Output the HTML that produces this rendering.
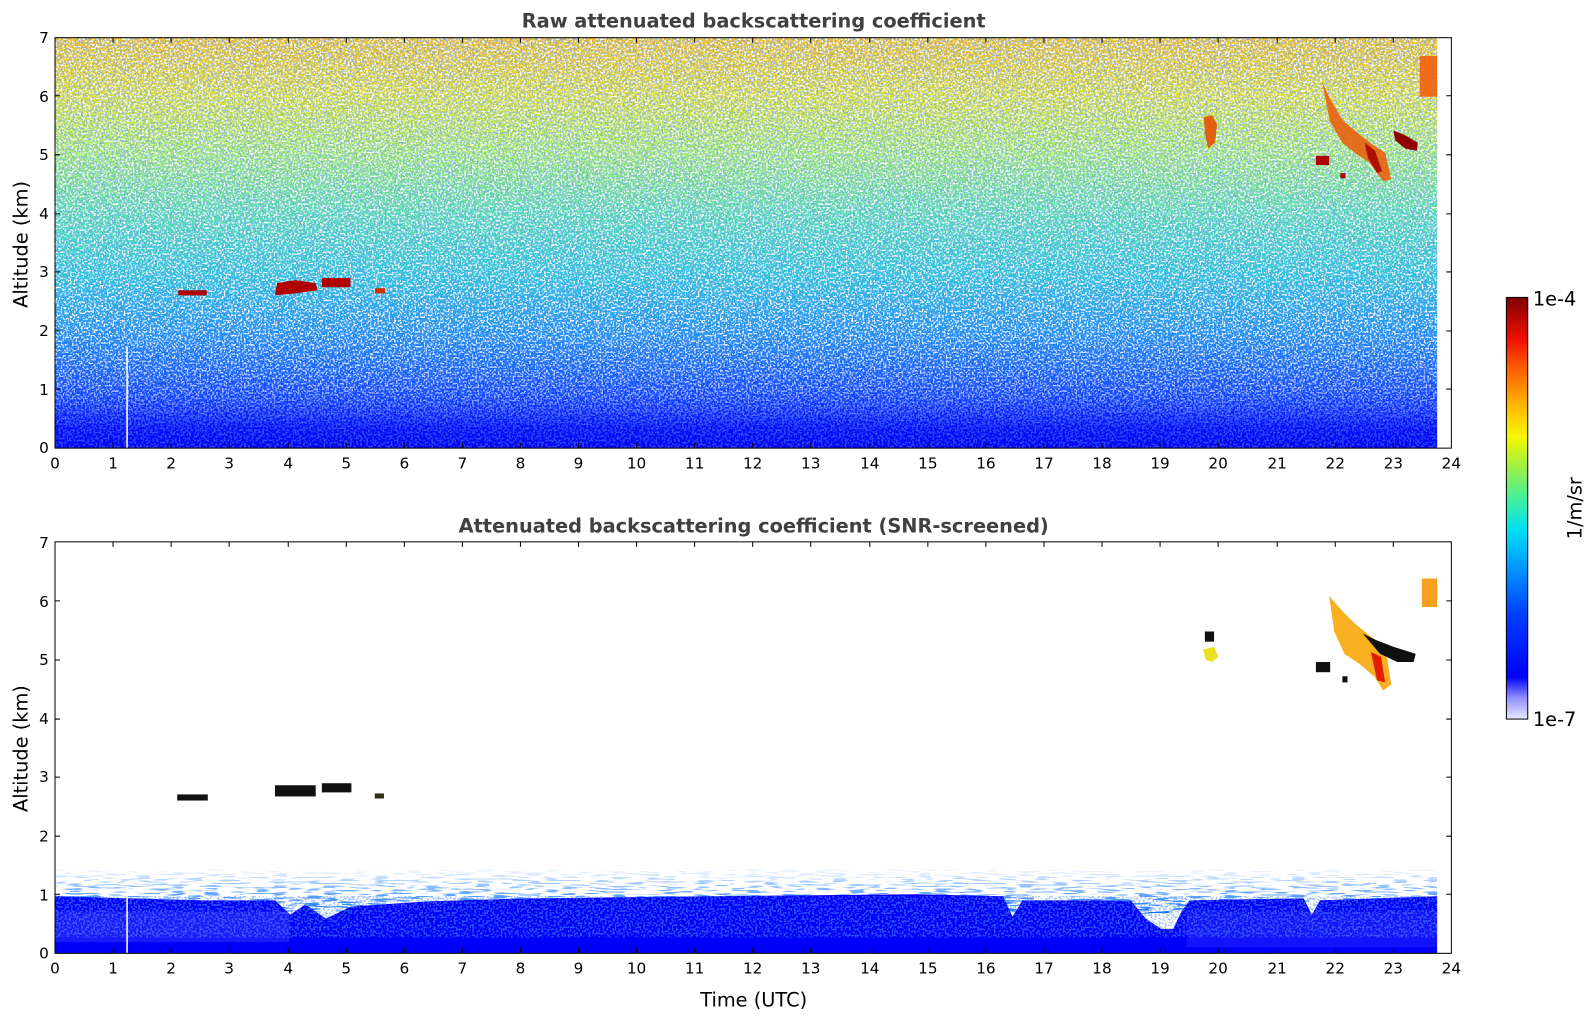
<!DOCTYPE html>
<html><head><meta charset="utf-8"><style>
html,body{margin:0;padding:0;background:#fff;overflow:hidden;}
svg{display:block;font-family:"DejaVu Sans","Liberation Sans",sans-serif;}
</style></head><body>
<svg width="1595" height="1020" viewBox="0 0 1595 1020" xmlns="http://www.w3.org/2000/svg">
<defs>
<linearGradient id="top" x1="0" y1="1" x2="0" y2="0">
<stop offset="0" stop-color="#0000f0"/>
<stop offset="0.05" stop-color="#0008f8"/>
<stop offset="0.13" stop-color="#1040ff"/>
<stop offset="0.28" stop-color="#2090f0"/>
<stop offset="0.42" stop-color="#30c8d8"/>
<stop offset="0.57" stop-color="#60e0b0"/>
<stop offset="0.72" stop-color="#a8ec70"/>
<stop offset="0.86" stop-color="#e0e040"/>
<stop offset="1" stop-color="#f0c030"/>
</linearGradient>
<linearGradient id="nm" x1="0" y1="1" x2="0" y2="0">
<stop offset="0" stop-color="#000"/>
<stop offset="0.05" stop-color="#222"/>
<stop offset="0.14" stop-color="#aaa"/>
<stop offset="0.3" stop-color="#fff"/>
<stop offset="1" stop-color="#fff"/>
</linearGradient>
<mask id="mk"><rect x="54" y="37" width="1357" height="403" fill="url(#nm)"/></mask>
<filter id="noise" x="0" y="0" width="100%" height="100%">
<feTurbulence type="fractalNoise" baseFrequency="0.55" numOctaves="1" seed="5"/>
<feColorMatrix type="matrix" values="0 0 0 0 1  0 0 0 0 1  0 0 0 0 1  14 0 0 0 -7.3"/>
</filter>
<filter id="noise2" x="0" y="0" width="100%" height="100%">
<feTurbulence type="fractalNoise" baseFrequency="0.5" numOctaves="1" seed="9"/>
<feColorMatrix type="matrix" values="0 0 0 0 0.1  0 0 0 0 0.3  0 0 0 0 1  0 14 0 0 -7"/>
</filter>
<filter id="streak" x="0" y="0" width="100%" height="100%">
<feTurbulence type="fractalNoise" baseFrequency="0.06 0.7" numOctaves="1" seed="3"/>
<feColorMatrix type="matrix" values="0 0 0 0 0  0 0 0 0 0.15  0 0 0 0 1  16 0 0 0 -8.6"/>
</filter>
<linearGradient id="sm" x1="0" y1="1" x2="0" y2="0">
<stop offset="0" stop-color="#fff"/>
<stop offset="0.5" stop-color="#888"/>
<stop offset="1" stop-color="#000"/>
</linearGradient>
<mask id="smk"><rect x="54" y="852" width="1357" height="45" fill="url(#sm)"/></mask>
<linearGradient id="cb" x1="0" y1="1" x2="0" y2="0">
<stop offset="0" stop-color="#e8e8ff"/>
<stop offset="0.05" stop-color="#9090ff"/>
<stop offset="0.1" stop-color="#0000ff"/>
<stop offset="0.25" stop-color="#0040ff"/>
<stop offset="0.37" stop-color="#00a0ff"/>
<stop offset="0.45" stop-color="#00e0f0"/>
<stop offset="0.52" stop-color="#40f0a0"/>
<stop offset="0.6" stop-color="#a0f040"/>
<stop offset="0.67" stop-color="#f8f800"/>
<stop offset="0.75" stop-color="#ffb000"/>
<stop offset="0.83" stop-color="#ff6000"/>
<stop offset="0.9" stop-color="#f01000"/>
<stop offset="1" stop-color="#800000"/>
</linearGradient>
</defs>
<g transform="scale(1.0185)">
<text x="740" y="27" text-anchor="middle" font-size="19" font-weight="bold" fill="#404040">Raw attenuated backscattering coefficient</text>
<rect x="54" y="37" width="1357" height="403" fill="url(#top)"/>
<rect x="54" y="37" width="1357" height="403" filter="url(#noise)" mask="url(#mk)"/>
<rect x="54" y="37" width="1357" height="403" filter="url(#noise2)" opacity="0.45"/>
<rect x="124" y="340" width="1.5" height="100" fill="#fff"/>
<g fill="#b00000">
<rect x="175" y="285" width="28" height="5"/>
<path d="M270 290 L272 278 L290 275 L310 278 L312 285 L290 288Z"/>
<rect x="316" y="273" width="28" height="9"/>
<rect x="368" y="283" width="10" height="5" fill="#d03000"/>
<path d="M1182 115 L1190 113 L1195 122 L1193 140 L1186 146 L1183 130Z" fill="#e06010"/>
<path d="M1298 80 L1305 95 L1318 118 L1330 128 L1345 140 L1360 150 L1366 176 L1358 178 L1345 160 L1330 150 L1318 140 L1306 120 Z" fill="#e86010" opacity="0.9"/>
<path d="M1340 140 L1350 148 L1357 168 L1352 170 L1343 155Z" fill="#b01000"/>
<path d="M1368 128 L1380 133 L1392 140 L1391 148 L1380 146 L1370 138Z" fill="#900000"/>
<rect x="1292" y="153" width="13" height="9"/>
<rect x="1316" y="170" width="5" height="5"/>
<rect x="1394" y="55" width="17" height="40" fill="#f06010" opacity="0.9"/>
</g>
<rect x="54" y="37" width="1371" height="403" fill="none" stroke="#000" stroke-width="1"/>

<text x="740" y="523" text-anchor="middle" font-size="19" font-weight="bold" fill="#404040">Attenuated backscattering coefficient (SNR-screened)</text>
<rect x="54" y="852" width="1357" height="45" filter="url(#streak)" mask="url(#smk)"/>
<path d="M54 936 L54 880 L200 884 L270 884 L285 898 L300 888 L320 902 L345 890 L420 885 L520 882 L700 880 L900 878 L985 880 L994 900 L1004 884 L1110 884 L1125 902 L1140 912 L1152 912 L1160 895 L1168 884 L1280 882 L1288 898 L1296 884 L1411 880 L1411 936Z" fill="#0000f8"/>
<rect x="54" y="880" width="1357" height="40" filter="url(#noise2)" opacity="0.5"/>
<rect x="54" y="895" width="230" height="30" fill="#8080ff" opacity="0.2"/>
<rect x="1165" y="895" width="246" height="35" fill="#8080ff" opacity="0.15"/>
<rect x="124" y="870" width="1.5" height="66" fill="#fff"/>
<g>
<rect x="174" y="780" width="30" height="6" fill="#101010"/>
<rect x="270" y="771" width="40" height="11" fill="#101010"/>
<rect x="316" y="769" width="29" height="9" fill="#101010"/>
<rect x="368" y="779" width="9" height="5" fill="#303010"/>
<rect x="1183" y="620" width="9" height="10" fill="#101010"/>
<path d="M1181 638 L1192 635 L1196 645 L1190 650 L1184 648Z" fill="#e8e020"/>
<path d="M1305 585 L1318 600 L1330 612 L1346 625 L1360 635 L1366 672 L1358 678 L1350 665 L1335 652 L1320 642 L1310 620Z" fill="#f8b020"/>
<path d="M1346 640 L1356 645 L1360 670 L1352 668Z" fill="#e02000"/>
<path d="M1338 622 L1350 628 L1368 635 L1390 642 L1388 650 L1372 650 L1355 642Z" fill="#101010"/>
<rect x="1292" y="650" width="14" height="10" fill="#101010"/>
<rect x="1318" y="664" width="5" height="6" fill="#101010"/>
<rect x="1396" y="568" width="15" height="28" fill="#f8a020"/>
</g>
<rect x="54" y="532" width="1371" height="404" fill="none" stroke="#000" stroke-width="1"/>

<g stroke="#000" stroke-width="1">
<path d="M111 440v-5M168 440v-5M225 440v-5M283 440v-5M340 440v-5M397 440v-5M454 440v-5M511 440v-5M568 440v-5M625 440v-5M682 440v-5M739 440v-5M796 440v-5M854 440v-5M911 440v-5M968 440v-5M1025 440v-5M1082 440v-5M1139 440v-5M1196 440v-5M1254 440v-5M1311 440v-5M1368 440v-5
M111 37v5M168 37v5M225 37v5M283 37v5M340 37v5M397 37v5M454 37v5M511 37v5M568 37v5M625 37v5M682 37v5M739 37v5M796 37v5M854 37v5M911 37v5M968 37v5M1025 37v5M1082 37v5M1139 37v5M1196 37v5M1254 37v5M1311 37v5M1368 37v5
M111 936v-5M168 936v-5M225 936v-5M283 936v-5M340 936v-5M397 936v-5M454 936v-5M511 936v-5M568 936v-5M625 936v-5M682 936v-5M739 936v-5M796 936v-5M854 936v-5M911 936v-5M968 936v-5M1025 936v-5M1082 936v-5M1139 936v-5M1196 936v-5M1254 936v-5M1311 936v-5M1368 936v-5
M111 532v5M168 532v5M225 532v5M283 532v5M340 532v5M397 532v5M454 532v5M511 532v5M568 532v5M625 532v5M682 532v5M739 532v5M796 532v5M854 532v5M911 532v5M968 532v5M1025 532v5M1082 532v5M1139 532v5M1196 532v5M1254 532v5M1311 532v5M1368 532v5
M54 382h5M54 325h5M54 267h5M54 210h5M54 152h5M54 94h5M1425 382h-5M1425 325h-5M1425 267h-5M1425 210h-5M1425 152h-5M1425 94h-5
M54 878h5M54 821h5M54 763h5M54 706h5M54 648h5M54 590h5M1425 878h-5M1425 821h-5M1425 763h-5M1425 706h-5M1425 648h-5M1425 590h-5"/>
</g>
<g font-size="15" fill="#000" text-anchor="middle">
<text x="54" y="460">0</text><text x="111" y="460">1</text><text x="168" y="460">2</text><text x="225" y="460">3</text><text x="283" y="460">4</text><text x="340" y="460">5</text><text x="397" y="460">6</text><text x="454" y="460">7</text><text x="511" y="460">8</text><text x="568" y="460">9</text><text x="625" y="460">10</text><text x="682" y="460">11</text><text x="739" y="460">12</text><text x="796" y="460">13</text><text x="854" y="460">14</text><text x="911" y="460">15</text><text x="968" y="460">16</text><text x="1025" y="460">17</text><text x="1082" y="460">18</text><text x="1139" y="460">19</text><text x="1196" y="460">20</text><text x="1254" y="460">21</text><text x="1311" y="460">22</text><text x="1368" y="460">23</text><text x="1425" y="460">24</text>
<text x="54" y="956">0</text><text x="111" y="956">1</text><text x="168" y="956">2</text><text x="225" y="956">3</text><text x="283" y="956">4</text><text x="340" y="956">5</text><text x="397" y="956">6</text><text x="454" y="956">7</text><text x="511" y="956">8</text><text x="568" y="956">9</text><text x="625" y="956">10</text><text x="682" y="956">11</text><text x="739" y="956">12</text><text x="796" y="956">13</text><text x="854" y="956">14</text><text x="911" y="956">15</text><text x="968" y="956">16</text><text x="1025" y="956">17</text><text x="1082" y="956">18</text><text x="1139" y="956">19</text><text x="1196" y="956">20</text><text x="1254" y="956">21</text><text x="1311" y="956">22</text><text x="1368" y="956">23</text><text x="1425" y="956">24</text>
</g>
<g font-size="15" fill="#000" text-anchor="end">
<text x="48" y="445">0</text><text x="48" y="388">1</text><text x="48" y="330">2</text><text x="48" y="272">3</text><text x="48" y="215">4</text><text x="48" y="157">5</text><text x="48" y="100">6</text><text x="48" y="42">7</text>
<text x="48" y="941">0</text><text x="48" y="884">1</text><text x="48" y="826">2</text><text x="48" y="768">3</text><text x="48" y="711">4</text><text x="48" y="653">5</text><text x="48" y="596">6</text><text x="48" y="538">7</text>
</g>
<text transform="translate(27,240) rotate(-90)" font-size="19" text-anchor="middle" fill="#000">Altitude (km)</text>
<text transform="translate(27,735) rotate(-90)" font-size="19" text-anchor="middle" fill="#000">Altitude (km)</text>
<text x="740" y="988" font-size="19" text-anchor="middle" fill="#000">Time (UTC)</text>

<rect x="1479" y="292" width="21" height="414" fill="url(#cb)" stroke="#000" stroke-width="1"/>
<text x="1505" y="300" font-size="19" fill="#000">1e-4</text>
<text x="1505" y="713" font-size="19" fill="#000">1e-7</text>
<text transform="translate(1553,499) rotate(-90)" font-size="19" text-anchor="middle" fill="#000">1/m/sr</text>
</g>
</svg>
</body></html>
